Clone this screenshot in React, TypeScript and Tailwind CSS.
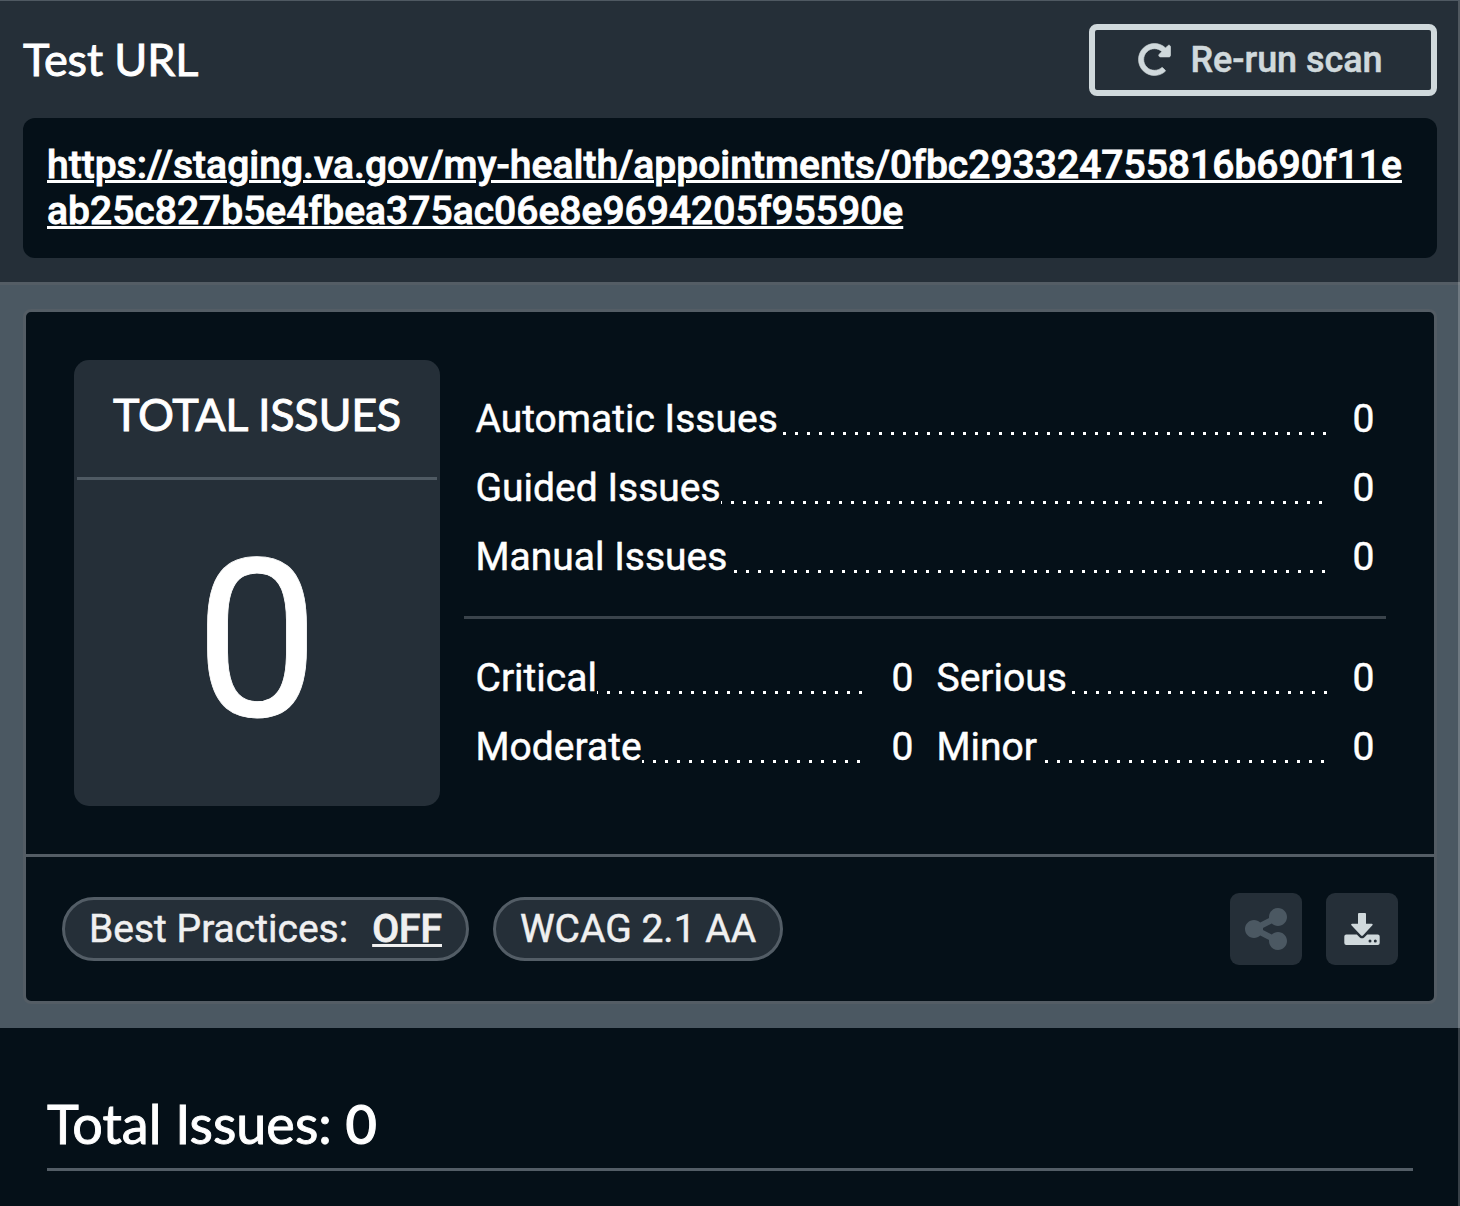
import React from 'react';
import { FaShareNodes } from 'react-icons/fa6';
import { FaRedoAlt } from 'react-icons/fa';

type Leader = { label: string; end: number };

const kinds: Leader[] = [
  { label: 'Automatic Issues', end: 3 },
  { label: 'Guided Issues', end: 7.5 },
  { label: 'Manual Issues', end: 4 },
];

const severities: Leader[] = [
  { label: 'Critical', end: 6 },
  { label: 'Serious', end: 2 },
  { label: 'Moderate', end: 8.4 },
  { label: 'Minor', end: 5 },
];

// `end` is the gap between the last dot of the leader and the number column.
function IssueRow({ label, end }: Leader) {
  return (
    <div className="flex h-[69px] items-center pr-[11.5px] pl-[11.5px]">
      <span className="mt-0.5 h-[45px] shrink-0 leading-[45px]">{label}</span>
      <span
        className="mt-[30px] h-[3px] flex-1 bg-[repeating-linear-gradient(to_left,#fff_0px,#fff_3px,transparent_3px,transparent_12px)]"
        style={{ marginRight: end }}
      />
      <span className="mt-0.5 h-[45px] w-[45.5px] text-right leading-[45px]">0</span>
    </div>
  );
}

function DownloadIcon() {
  return (
    <svg viewBox="0 0 36 33" className="h-[33px] w-9" fill="currentColor">
      <path d="M15 0h6q1 0 1 1v9.700h5.800q1.600.3.6 1.600L18.900 22.500q-.9.8-1.800 0L7.400 12.300q-.9-1.300.6-1.600h6V1q0-1 1-1Z" />
      <path
        fillRule="evenodd"
        d="M2.300 21.400H12.800l3 3q2.200 1.800 4.400 0l3-3H33.700q2 0 2 2v6.600q0 2-2 2H2.300q-2 0-2-2v-6.600q0-2 2-2ZM26 26.500a1.500 1.500 0 1 0 0 3 1.500 1.500 0 0 0 0-3Zm5.300 0a1.500 1.500 0 1 0 0 3 1.500 1.500 0 0 0 0-3Z"
      />
    </svg>
  );
}

export default function App() {
  return (
    <div className="relative h-[1206px] w-[1460px] overflow-hidden border-t border-[#4f5962] bg-[#051018] font-['Roboto',sans-serif] text-[39px] text-white [-webkit-text-stroke:0.5px]">
      <header className="border-b-[3px] border-[#545d65] bg-[#252f38] px-[23px] pt-[23px] pb-6">
        <div className="flex h-[72px] items-center justify-between">
          <h1 className="mb-0.5 font-['Lato',sans-serif] text-[45px] leading-[70px] font-normal tracking-[-0.15px] [-webkit-text-stroke:0.9px]">
            Test URL
          </h1>
          <button className="flex h-[72px] w-[348px] items-center rounded-[8px] border-[6px] border-[#d0d9dc] pl-[43px] text-[36px] font-medium tracking-[-0.06px] text-[#d0d9dc]">
            <FaRedoAlt className="mb-px size-[33px] overflow-visible stroke-current [stroke-width:10]" />
            <span className="ml-[19.5px]">Re-run scan</span>
          </button>
        </div>
        <div className="mt-[22px] h-[140px] rounded-[12px] bg-[#051018] p-6 leading-[46px] font-medium tracking-[0.014px] break-all">
          <a className="underline decoration-[3px] [-webkit-text-stroke:0.8px]">
            https://staging.va.gov/my-health/appointments/0fbc293324755816b690f11eab25c827b5e4fbea375ac06e8e9694205f95590e
          </a>
        </div>
      </header>

      <main className="bg-[#4b5862] px-[23px] py-6">
        <section className="h-[695px] rounded-[8px] border-[3px] border-[#545d65] bg-[#051018]">
          <div className="flex h-[545px] border-b-[3px] border-[#545d65] p-12">
            <div className="h-[446px] w-[366px] rounded-[15px] bg-[#252f38] p-[3px] text-center">
              <h2 className="h-[117px] border-b-[3px] border-[#4f5a63] font-['Lato',sans-serif] text-[45px] leading-[103px] font-normal tracking-[-0.33px] [-webkit-text-stroke:0.9px]">
                TOTAL ISSUES
              </h2>
              <div className="text-[220px] leading-[323px] [-webkit-text-stroke:0.8px]">0</div>
            </div>
            <div className="ml-6 w-[922px] pt-6">
              {kinds.map((k) => (
                <IssueRow key={k.label} {...k} />
              ))}
              <hr className="mt-[25px] mb-6 border-t-[3px] border-[#3a434b]" />
              <div className="grid grid-cols-2">
                {severities.map((s) => (
                  <IssueRow key={s.label} {...s} />
                ))}
              </div>
            </div>
          </div>
          <footer className="flex h-36 items-center gap-6 px-9 text-[#f0f0f0]">
            <div className="flex h-16 w-[407px] items-center rounded-full border-[3px] border-[#535d66] bg-[#252f38] pl-6">
              Best Practices:
              <span className="ml-6 font-medium underline decoration-[3px] [-webkit-text-stroke:0.8px]">OFF</span>
            </div>
            <div className="flex h-16 w-[290px] items-center rounded-full border-[3px] border-[#535d66] bg-[#252f38] pl-6">
              WCAG 2.1 AA
            </div>
            <button className="ml-auto flex size-[72px] items-center justify-center rounded-[9px] bg-[#252f38] text-[#4b5862]">
              <FaShareNodes className="h-12 w-[42px]" />
            </button>
            <button className="flex size-[72px] items-center justify-center rounded-[9px] bg-[#252f38] text-[#d0d9dc]">
              <DownloadIcon />
            </button>
          </footer>
        </section>
      </main>

      <div className="px-[47px] pt-[60px]">
        <h2 className="h-[83px] border-b-[3px] border-[#535d66] font-['Lato',sans-serif] text-[54px] leading-[72px] font-normal [-webkit-text-stroke:0.9px]">
          Total Issues: <span className="font-medium [-webkit-text-stroke:1.2px]">0</span>
        </h2>
      </div>
      <div className="absolute inset-y-0 right-0 w-0.5 bg-white/20" />
    </div>
  );
}
